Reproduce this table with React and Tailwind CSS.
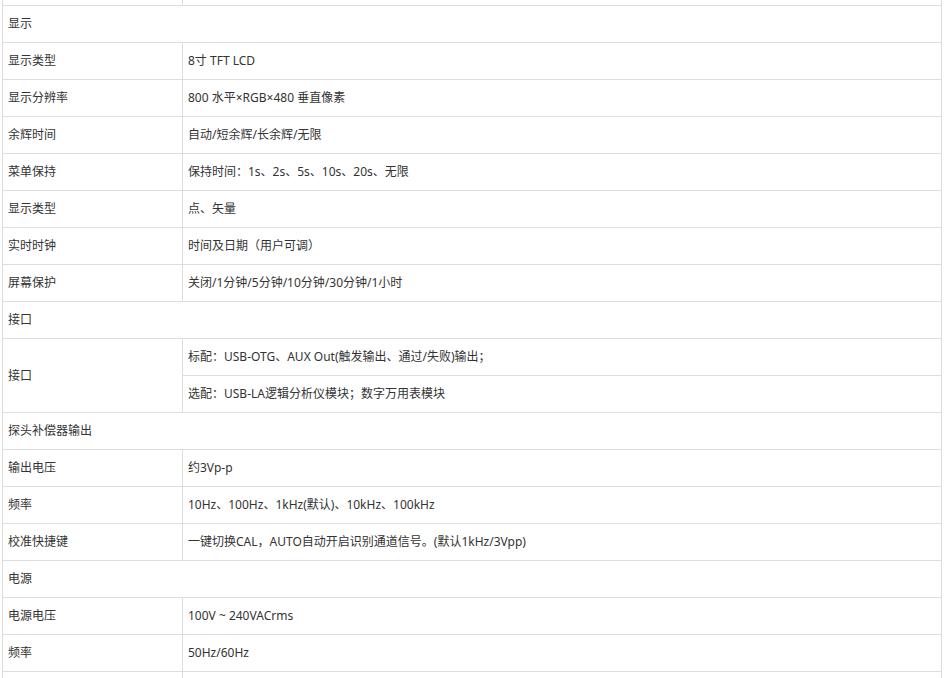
import React from "react";

const sections = [
  {
    title: "显示",
    rows: [
      ["显示类型", "8寸 TFT LCD"],
      ["显示分辨率", "800 水平×RGB×480 垂直像素"],
      ["余辉时间", "自动/短余辉/长余辉/无限"],
      ["菜单保持", "保持时间：1s、2s、5s、10s、20s、无限"],
      ["显示类型", "点、矢量"],
      ["实时时钟", "时间及日期（用户可调）"],
      ["屏幕保护", "关闭/1分钟/5分钟/10分钟/30分钟/1小时"],
    ],
  },
  {
    title: "接口",
    rows: [
      [
        "接口",
        [
          "标配：USB-OTG、AUX Out(触发输出、通过/失败)输出；",
          "选配：USB-LA逻辑分析仪模块；数字万用表模块",
        ],
      ],
    ],
  },
  {
    title: "探头补偿器输出",
    rows: [
      ["输出电压", "约3Vp-p"],
      ["频率", "10Hz、100Hz、1kHz(默认)、10kHz、100kHz"],
      ["校准快捷键", "一键切换CAL，AUTO自动开启识别通道信号。(默认1kHz/3Vpp)"],
    ],
  },
  {
    title: "电源",
    rows: [
      ["电源电压", "100V ~ 240VACrms"],
      ["频率", "50Hz/60Hz"],
      ["", ""],
    ],
  },
];

function Row({ label, value }) {
  const values = Array.isArray(value) ? value : [value];
  return (
    <div className="flex border-t border-[#ddd]">
      <div className="w-[180px] shrink-0 border-r border-[#ddd] pl-[5px] flex items-center">
        {label}
      </div>
      <div className="flex-1 flex flex-col">
        {values.map((v, i) => (
          <div
            key={i}
            className={
              "pl-[5px] flex items-center" +
              (i > 0 ? " border-t border-[#ddd] h-[37px]" : " h-[36px]")
            }
          >
            {v}
          </div>
        ))}
      </div>
    </div>
  );
}

export default function App() {
  return (
    <div
      className="w-[948px] h-[678px] overflow-hidden bg-white text-[12px] text-[#333]"
      style={{ fontFamily: '"Noto Sans", "Noto Sans CJK SC", sans-serif' }}
    >
      <div className="ml-[2px] w-[940px] border-l border-r border-[#ddd]">
        <div className="flex h-[5px]">
          <div className="w-[180px] border-r border-[#ddd]" />
        </div>
        {sections.map((s) => (
          <div key={s.title}>
            <div className="h-[37px] border-t border-[#ddd] pl-[5px] flex items-center">
              {s.title}
            </div>
            {s.rows.map(([label, value], i) => (
              <Row key={i} label={label} value={value} />
            ))}
          </div>
        ))}
      </div>
    </div>
  );
}
